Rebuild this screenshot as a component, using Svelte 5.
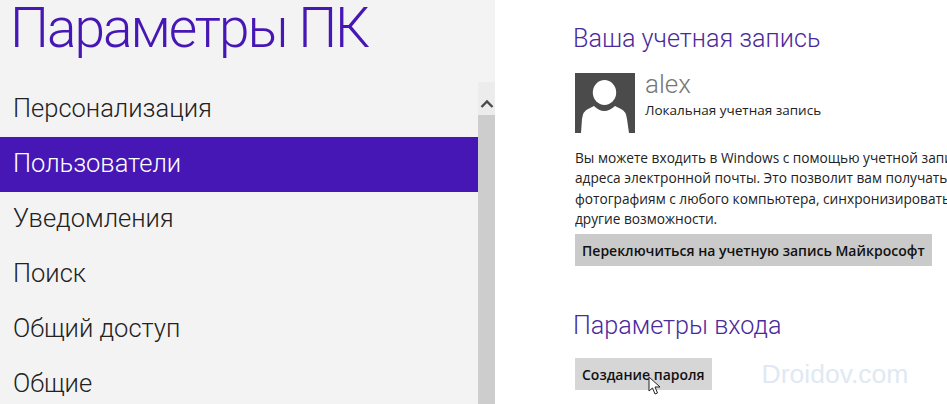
<script>
  const navItems = ['Персонализация', 'Пользователи', 'Уведомления', 'Поиск', 'Общий доступ', 'Общие'];
  const selected = 'Пользователи';
</script>

<div class="page">
  <aside class="sidebar">
    <h1>Параметры ПК</h1>
    <div class="nav-wrap">
      <ul class="nav">
        {#each navItems as item}
          <li class:active={item === selected}>{item}</li>
        {/each}
      </ul>
      <div class="scrollbar">
        <div class="arrow">
          <svg width="14" height="9" viewBox="0 0 14 9"><path d="M1.5 8 L7 2.5 L12.5 8" fill="none" stroke="#4a4a4a" stroke-width="2.4" /></svg>
        </div>
        <div class="thumb"></div>
      </div>
    </div>
  </aside>

  <main class="content">
    <h2 class="first">Ваша учетная запись</h2>
    <div class="account">
      <svg class="avatar" width="60" height="60" viewBox="0 0 60 60">
        <rect width="60" height="60" fill="#4b4b4b" />
        <path d="M6 60 L7 46 Q8 38 13 36 L19 33 Q29 43 40 33 L46 36 Q51 38 52 46 L54 60 Z" fill="#fff" />
        <ellipse cx="29.5" cy="19.5" rx="11.7" ry="12.5" fill="#fff" />
      </svg>
      <div class="who">
        <div class="name">alex</div>
        <div class="kind">Локальная учетная запись</div>
      </div>
    </div>
    <p class="info">
      <span>Вы можете входить в Windows с помощью учетной записи Майкрософт</span>
      <span>адреса электронной почты. Это позволит вам получать доступ к</span>
      <span>фотографиям с любого компьютера, синхронизировать параметры и</span>
      <span>другие возможности.</span>
    </p>
    <button class="btn">Переключиться на учетную запись Майкрософт</button>

    <h2 class="second">Параметры входа</h2>
    <div class="row">
      <div class="btn-wrap">
        <button class="btn hover">Создание пароля</button>
        <svg class="cursor" width="14" height="20" viewBox="0 0 14 20">
          <path d="M1 1 L1 15 L4.5 12 L7 18 L9.5 17 L7 11 L12 11 Z" fill="#fff" stroke="#222" stroke-width="1" />
        </svg>
      </div>
      <span class="watermark">Droidov.com</span>
    </div>
  </main>
</div>

<style>
  :global(body) {
    margin: 0;
    background: #fff;
    overflow: hidden;
  }

  .page {
    display: flex;
    width: 947px;
    height: 404px;
    overflow: hidden;
    font-family: 'Open Sans', 'Noto Sans', sans-serif;
  }

  .sidebar {
    width: 495px;
    flex: none;
    background: #f3f3f4;
    display: flex;
    flex-direction: column;
  }

  h1 {
    margin: 0;
    height: 82px;
    padding-left: 10px;
    font-family: Roboto, sans-serif;
    font-size: 55px;
    line-height: 56px;
    font-weight: 300;
    letter-spacing: -2px;
    color: #4617b4;
    white-space: nowrap;
  }

  .nav-wrap {
    display: flex;
    flex: 1;
    min-height: 0;
  }

  .nav {
    list-style: none;
    margin: 0;
    padding: 0;
    flex: 1;
  }

  .nav li {
    height: 55px;
    line-height: 53px;
    padding-left: 13px;
    font-family: Roboto, sans-serif;
    font-weight: 300;
    font-size: 25.5px;
    color: #222;
  }

  .nav li.active {
    background: #4617b4;
    color: #fff;
  }

  .scrollbar {
    width: 17px;
    display: flex;
    flex-direction: column;
  }

  .arrow {
    height: 33px;
    background: #ececec;
    display: flex;
    align-items: center;
    justify-content: center;
    padding-top: 10px;
    box-sizing: border-box;
  }

  .thumb {
    flex: 1;
    background: #cdcdcd;
  }

  .content {
    flex: 1;
    padding-left: 80px;
    min-width: 0;
  }

  h2 {
    margin: 0 0 0 -2px;
    font-family: Roboto, sans-serif;
    font-weight: 300;
    font-size: 25.2px;
    line-height: 32px;
    color: #4b2a9c;
    white-space: nowrap;
  }

  h2.first {
    margin-top: 23px;
  }

  h2.second {
    margin-top: 44px;
  }

  .account {
    display: flex;
    gap: 10px;
    margin-top: 18px;
    height: 60px;
  }

  .avatar {
    display: block;
  }

  .who {
    margin-top: -3px;
  }

  .name {
    font-family: Roboto, sans-serif;
    font-weight: 300;
    font-size: 26px;
    line-height: 28px;
    color: #777;
  }

  .kind {
    font-size: 13.5px;
    line-height: 20px;
    margin-top: 2px;
    color: #222;
  }

  .info {
    margin: 15px 0 0;
    width: 372px;
    overflow: hidden;
    font-size: 13.7px;
    line-height: 20.3px;
    color: #222;
  }

  .info span {
    display: block;
    white-space: nowrap;
  }

  .btn {
    display: block;
    height: 32px;
    margin-top: 5px;
    padding: 0 7px;
    border: 0;
    background: #cacaca;
    color: #111;
    font-family: 'Open Sans', sans-serif;
    font-weight: 600;
    font-size: 14px;
    white-space: nowrap;
  }

  .btn.hover {
    margin-top: 0;
    background: #d6d6d6;
  }

  .row {
    display: flex;
    align-items: center;
    gap: 50px;
    margin-top: 16px;
  }

  .btn-wrap {
    position: relative;
  }

  .cursor {
    position: absolute;
    left: 73px;
    top: 18px;
  }

  .watermark {
    font-family: 'Liberation Sans', sans-serif;
    font-size: 26.5px;
    color: #e0e9f3;
    white-space: nowrap;
  }
</style>
